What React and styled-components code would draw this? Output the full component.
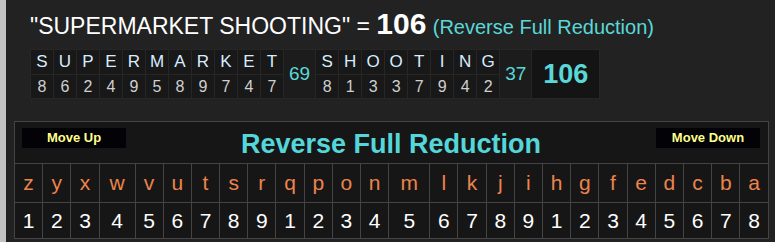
import React from 'react';
import styled, { createGlobalStyle } from 'styled-components';

const Global = createGlobalStyle`
  body {
    margin: 0;
    background: #222;
    font-family: 'Liberation Sans', Arial, sans-serif;
  }
`;

const Page = styled.div`
  height: 242px;
  box-sizing: border-box;
  border-left: 6px solid #c2c2c2;
  background: #222;
  overflow: hidden;
`;

const Heading = styled.div`
  padding: 9px 0 0 24px;
  height: 49px;
  box-sizing: border-box;
  color: #fff;
  font-size: 23px;
  line-height: 30px;
  white-space: nowrap;
`;

const Total = styled.span`
  font-weight: 700;
  font-size: 30px;
`;

const Cipher = styled.span`
  color: #5ad8d8;
  font-size: 20px;
`;

const Breakdown = styled.table`
  margin-left: 24px;
  border-collapse: collapse;
  background: #181818;
`;

const Cell = styled.td`
  border: 1px solid #262626;
  width: 22px;
  height: ${(p) => (p.$top ? '24px' : '23px')};
  padding: 0;
  text-align: center;
  font-size: ${(p) => (p.$top ? '17px' : '16px')};
  color: ${(p) => (p.$top ? '#d8ecff' : '#cfcfcf')};
`;

const Sub = styled.td`
  border: 1px solid #262626;
  padding: 0 5px;
  text-align: center;
  vertical-align: middle;
  color: #5ad8d8;
  font-size: 19px;
  background: #1c1c1c;
`;

const Grand = styled.td`
  border: 1px solid #262626;
  padding: 0 11px;
  text-align: center;
  color: #5ad8d8;
  font-weight: 700;
  font-size: 27px;
  background: #141414;
`;

const Chart = styled.table`
  margin: 22px 0 0 8px;
  width: 755px;
  border-collapse: collapse;
  background: #161616;
`;

const TitleCell = styled.td`
  border: 1px solid #444;
  height: 41px;
  padding: 0;
`;

const TitleBar = styled.div`
  display: flex;
  align-items: flex-start;
  justify-content: space-between;
  padding: 6px 8px 0 7px;
  height: 41px;
  box-sizing: border-box;
`;

const MoveBtn = styled.div`
  width: 104px;
  height: 20px;
  background: #020207;
  color: #ffff8a;
  font-weight: 700;
  font-size: 13px;
  line-height: 20px;
  text-align: center;
`;

const Title = styled.div`
  color: #55d6da;
  font-weight: 700;
  font-size: 27px;
  line-height: 30px;
  margin-top: 1px;
`;

const Key = styled.td`
  border: 1px solid #444;
  padding: 0;
  text-align: center;
  height: ${(p) => (p.$letter ? '38px' : '35px')};
  color: ${(p) => (p.$letter ? '#ec844c' : '#fff')};
  font-size: 21px;
`;

const words = [
  { letters: 'SUPERMARKET', values: '86249589747', sum: 69 },
  { letters: 'SHOOTING', values: '81337942', sum: 37 },
];

const alphabet = 'zyxwvutsrqponmlkjihgfedcba'.split('');
const values = alphabet.map((_, i) => (i % 9) + 1);

export default function App() {
  return (
    <Page>
      <Global />
      <Heading>
        "SUPERMARKET SHOOTING" = <Total>106</Total> <Cipher>(Reverse Full Reduction)</Cipher>
      </Heading>
      <Breakdown>
        <tbody>
          <tr>
            {words.map((w, wi) => (
              <React.Fragment key={wi}>
                {w.letters.split('').map((c, i) => (
                  <Cell $top key={i}>{c}</Cell>
                ))}
                <Sub rowSpan={2}>{w.sum}</Sub>
              </React.Fragment>
            ))}
            <Grand rowSpan={2}>106</Grand>
          </tr>
          <tr>
            {words.map((w, wi) =>
              w.values.split('').map((v, i) => <Cell key={`${wi}-${i}`}>{v}</Cell>)
            )}
          </tr>
        </tbody>
      </Breakdown>
      <Chart>
        <tbody>
          <tr>
            <TitleCell colSpan={26}>
              <TitleBar>
                <MoveBtn>Move Up</MoveBtn>
                <Title>Reverse Full Reduction</Title>
                <MoveBtn>Move Down</MoveBtn>
              </TitleBar>
            </TitleCell>
          </tr>
          <tr>
            {alphabet.map((c) => (
              <Key $letter key={c}>{c}</Key>
            ))}
          </tr>
          <tr>
            {values.map((v, i) => (
              <Key key={i}>{v}</Key>
            ))}
          </tr>
        </tbody>
      </Chart>
    </Page>
  );
}
